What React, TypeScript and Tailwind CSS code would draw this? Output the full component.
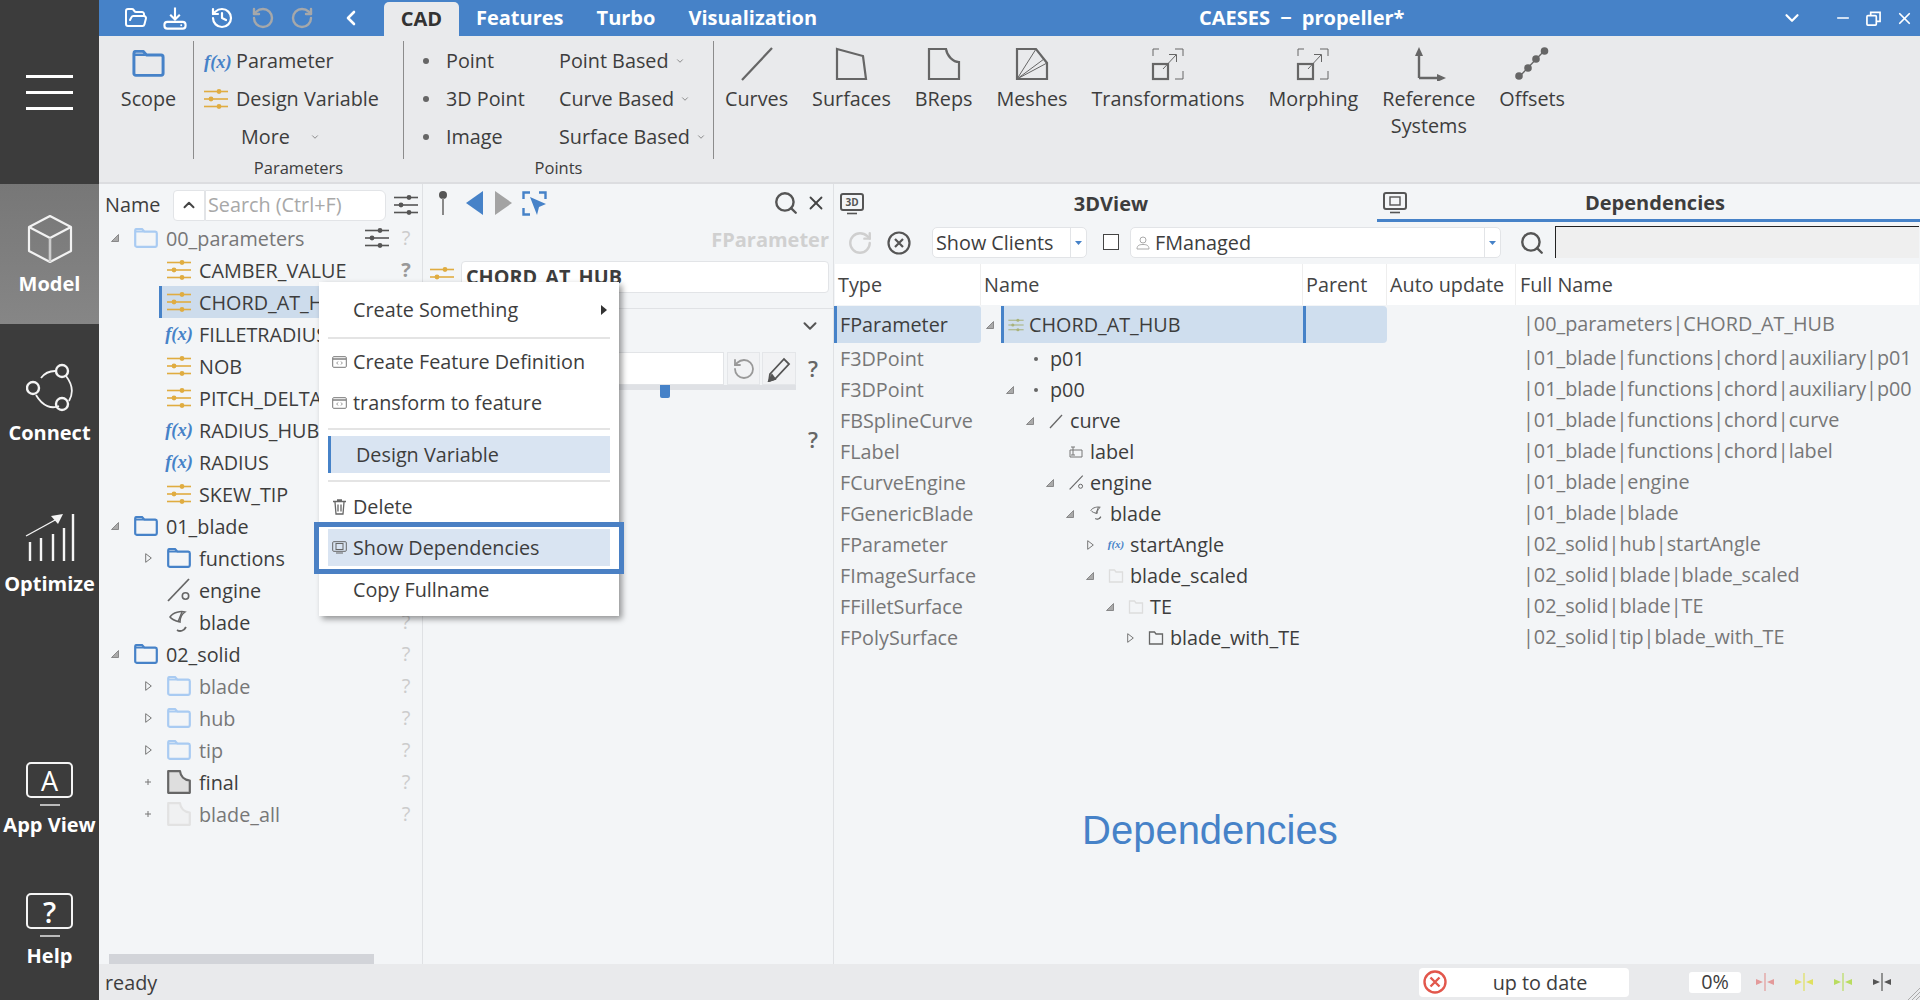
import React from 'react';
import { ChevronLeft, ChevronDown, ChevronUp, History, RotateCcw, RotateCw, Minus, X, Search, FolderOpen } from 'lucide-react';

const BLUE = '#4682c8';
const Sliders = ({ c = '#e0ac40', w = 24, h = 22 }: { c?: string; w?: number; h?: number }) => (
  <svg width={w} height={h} viewBox="0 0 24 22" className="shrink-0">
    <g stroke={c} strokeWidth="1.6" fill={c}>
      <line x1="0" y1="3.5" x2="24" y2="3.5" /><line x1="0" y1="11" x2="24" y2="11" /><line x1="0" y1="18.5" x2="24" y2="18.5" />
      <circle cx="15" cy="3.5" r="2.4" stroke="none" /><circle cx="7" cy="11" r="2.4" stroke="none" /><circle cx="15" cy="18.5" r="2.4" stroke="none" />
    </g>
  </svg>
);
const Folder = ({ c = BLUE, w = 24, h = 20 }: { c?: string; w?: number; h?: number }) => (
  <svg width={w} height={h} viewBox="0 0 24 20" className="shrink-0">
    <path d="M1.2 4.5V2.5A1.5 1.5 0 0 1 2.7 1H8L10.5 3.7H21.3A1.6 1.6 0 0 1 22.8 5.3V17.2A1.6 1.6 0 0 1 21.3 18.8H2.7A1.5 1.5 0 0 1 1.2 17.2Z" fill="none" stroke={c} strokeWidth="2.2" strokeLinejoin="round" />
    <path d="M1.5 2.5H8.5L10 4.5H1.5Z" fill={c} />
  </svg>
);
const Fx = ({ small }: { small?: boolean }) => (
  <span className={"font-['Liberation_Serif'] italic font-bold text-[#4682c8] leading-none shrink-0 " + (small ? 'text-[11px]' : 'text-[18.5px]')}>f(x)</span>
);
const Expanded = () => (
  <svg width="8" height="8" viewBox="0 0 8 8"><path d="M0.5 7.5L7.5 0.5V7.5Z" fill="#aaa" stroke="#777" strokeWidth="0.8" /></svg>
);
const Collapsed = () => (
  <svg width="7" height="10" viewBox="0 0 7 10"><path d="M0.7 0.7L6.3 5L0.7 9.3Z" fill="none" stroke="#777" strokeWidth="1" /></svg>
);
const Plus = () => (
  <svg width="8" height="8" viewBox="0 0 8 8"><path d="M4 1V7M1 4H7" stroke="#777" strokeWidth="1" /></svg>
);
const EngineIcon = ({ s = 24 }: { s?: number }) => (
  <svg width={s} height={s} viewBox="0 0 24 24" fill="none" stroke="#666" className="shrink-0"><path d="M1 23L22 1" strokeWidth="1.8" /><circle cx="18.5" cy="18" r="3.2" strokeWidth="1.6" /></svg>
);
const BladeIcon = ({ s = 24, c = '#666' }: { s?: number; c?: string }) => (
  <svg width={s} height={s} viewBox="0 0 24 24" fill="none" stroke={c} strokeWidth="1.5" className="shrink-0"><path d="M3 7C6 2 14 1 18 2C15 4 13 8 13 12C9 11 5 10 3 7Z" /><path d="M15 2L11 12" /><path d="M10 20C13 22 17 21 19 17" strokeWidth="1.8" /></svg>
);
const DocIcon = ({ fill, c, s = 24 }: { fill: string; c: string; s?: number }) => (
  <svg width={s} height={s} viewBox="0 0 24 24" className="shrink-0"><path d="M1.2 1.2H13C13.5 6 17 10 22.8 10.5V22.8H1.2Z" fill={fill} stroke={c} strokeWidth="2.2" strokeLinejoin="round" /></svg>
);
const Q = ({ v = 'light' }: { v?: string }) => (
  <span className={'w-4 text-center text-[20px] leading-none ' + (v === 'bold' ? 'font-bold text-[#999]' : 'text-[#ccc]')}>?</span>
);

type TR = { l: number; name: string; icon: string; arrow?: string; dim?: boolean; sel?: boolean; q?: string; gear?: boolean };
const tree: TR[] = [
  { l: 0, name: '00_parameters', icon: 'folderL', arrow: 'e', dim: true, q: 'light', gear: true },
  { l: 1, name: 'CAMBER_VALUE', icon: 's', q: 'bold' },
  { l: 1, name: 'CHORD_AT_HUB', icon: 's', sel: true },
  { l: 1, name: 'FILLETRADIUS', icon: 'f' },
  { l: 1, name: 'NOB', icon: 's' },
  { l: 1, name: 'PITCH_DELTA', icon: 's' },
  { l: 1, name: 'RADIUS_HUB', icon: 'f' },
  { l: 1, name: 'RADIUS', icon: 'f' },
  { l: 1, name: 'SKEW_TIP', icon: 's' },
  { l: 0, name: '01_blade', icon: 'folder', arrow: 'e' },
  { l: 1, name: 'functions', icon: 'folder', arrow: 'c' },
  { l: 1, name: 'engine', icon: 'engine' },
  { l: 1, name: 'blade', icon: 'blade', q: 'light' },
  { l: 0, name: '02_solid', icon: 'folder', arrow: 'e', q: 'light' },
  { l: 1, name: 'blade', icon: 'folderL', arrow: 'c', dim: true, q: 'light' },
  { l: 1, name: 'hub', icon: 'folderL', arrow: 'c', dim: true, q: 'light' },
  { l: 1, name: 'tip', icon: 'folderL', arrow: 'c', dim: true, q: 'light' },
  { l: 1, name: 'final', icon: 'doc', arrow: 'p', q: 'light' },
  { l: 1, name: 'blade_all', icon: 'docL', arrow: 'p', dim: true, q: 'light' },
];
const treeIcon = (k: string) => {
  if (k === 'folder') return <Folder />;
  if (k === 'folderL') return <Folder c="#a9cbf2" />;
  if (k === 's') return <Sliders />;
  if (k === 'f') return <div className="w-6 flex justify-center"><Fx /></div>;
  if (k === 'engine') return <EngineIcon />;
  if (k === 'blade') return <BladeIcon />;
  if (k === 'doc') return <DocIcon fill="#dedede" c="#666" />;
  return <DocIcon fill="#f0f1f2" c="#e2e2e2" />;
};
const Tree = () => (
  <div className="flex flex-col">
    {tree.map((r, i) => (
      <div key={i} className={'flex items-center h-8 ' + (r.l === 0 ? 'pl-[10px]' : 'pl-[43px]')}>
        <div className="w-3 flex justify-center items-center shrink-0">
          {r.arrow === 'e' && <Expanded />}
          {r.arrow === 'c' && <Collapsed />}
          {r.arrow === 'p' && <Plus />}
        </div>
        <div className={'ml-[5px] flex items-center h-8 border-l-[3px] pl-[5px] flex-1 min-w-0 ' + (r.sel ? 'border-[#4682c8] bg-[#cddcec]' : 'border-transparent')}>
          {treeIcon(r.icon)}
          <span className={'ml-2 pt-px whitespace-nowrap ' + (r.dim ? 'text-[#777]' : 'text-[#3d3d3d]')}>{r.name}</span>
        </div>
        {r.gear && <div className="mr-[9px]"><Sliders c="#555" /></div>}
        <div className="w-4 mr-2 flex justify-center">{r.q && <Q v={r.q} />}</div>
      </div>
    ))}
  </div>
);

const indents = ['pl-[0px]', 'pl-[20px]', 'pl-[40px]', 'pl-[60px]', 'pl-[80px]', 'pl-[100px]', 'pl-[120px]', 'pl-[140px]'];
const MiniDot = () => <div className="w-4 flex justify-center"><div className="w-[4px] h-[4px] rounded-full bg-[#666]" /></div>;
const MiniLine = () => <svg width="16" height="16" viewBox="0 0 16 16"><path d="M2 15L14 2" stroke="#666" strokeWidth="1.3" /></svg>;
const MiniLabel = () => <svg width="16" height="16" viewBox="0 0 16 16" fill="none" stroke="#777" strokeWidth="1"><path d="M2 6H14V13H2Z" /><path d="M3 3H7M5 3V11M3 11H7" /></svg>;
const MiniFace = ({ c }: { c: string }) => <svg width="16" height="16" viewBox="0 0 16 16"><path d="M1.5 2H6.5L8 4H14.5V14H1.5Z" fill="none" stroke={c} strokeWidth="1.3" /></svg>;
type DR = { t: string; l: number; n: string; a?: string; ic: React.ReactNode; full: string; sel?: boolean };
const deps: DR[] = [
  { t: 'FParameter', l: 0, n: 'CHORD_AT_HUB', a: 'e', ic: <Sliders c="#a9b27a" w={16} h={14} />, full: '|00_parameters|CHORD_AT_HUB', sel: true },
  { t: 'F3DPoint', l: 1, n: 'p01', ic: <MiniDot />, full: '|01_blade|functions|chord|auxiliary|p01' },
  { t: 'F3DPoint', l: 1, n: 'p00', a: 'e', ic: <MiniDot />, full: '|01_blade|functions|chord|auxiliary|p00' },
  { t: 'FBSplineCurve', l: 2, n: 'curve', a: 'e', ic: <MiniLine />, full: '|01_blade|functions|chord|curve' },
  { t: 'FLabel', l: 3, n: 'label', ic: <MiniLabel />, full: '|01_blade|functions|chord|label' },
  { t: 'FCurveEngine', l: 3, n: 'engine', a: 'e', ic: <EngineIcon s={15} />, full: '|01_blade|engine' },
  { t: 'FGenericBlade', l: 4, n: 'blade', a: 'e', ic: <BladeIcon s={15} />, full: '|01_blade|blade' },
  { t: 'FParameter', l: 5, n: 'startAngle', a: 'c', ic: <Fx small />, full: '|02_solid|hub|startAngle' },
  { t: 'FImageSurface', l: 5, n: 'blade_scaled', a: 'e', ic: <MiniFace c="#ddd" />, full: '|02_solid|blade|blade_scaled' },
  { t: 'FFilletSurface', l: 6, n: 'TE', a: 'e', ic: <MiniFace c="#ddd" />, full: '|02_solid|blade|TE' },
  { t: 'FPolySurface', l: 7, n: 'blade_with_TE', a: 'c', ic: <MiniFace c="#666" />, full: '|02_solid|tip|blade_with_TE' },
];

const Code = ({ c = '#777' }: { c?: string }) => (
  <svg width="15" height="12" viewBox="0 0 15 12" fill="none" stroke={c} className="shrink-0"><rect x="0.7" y="0.7" width="13.6" height="10.6" rx="1" /><path d="M1 3H14" strokeWidth="1.4" /><path d="M6 5.5L4.7 7L6 8.5M9 5.5L10.3 7L9 8.5" strokeWidth="0.8" /></svg>
);
const Screen = ({ s = 24, c = '#555', children }: { s?: number; c?: string; children?: React.ReactNode }) => (
  <svg width={s} height={(s * 22) / 24} viewBox="0 0 24 22" fill="none" stroke={c} className="shrink-0">
    <rect x="1" y="1" width="22" height="16" rx="2" strokeWidth="2" />
    <path d="M7 20.5H17" strokeWidth="1.6" />
    {children}
  </svg>
);

const RibbonLargeIcon = ({ k }: { k: string }) => {
  const c = '#666';
  const T = (
    <g fill="none" stroke={c}>
      <path d="M2 9V2H8M24 2H32V9M32 24V32H24" strokeWidth="1" />
      <rect x="2" y="17" width="15" height="15" strokeWidth="2.2" />
      <path d="M12 22L25 8M18 7.5H25.5V15" strokeWidth="1" />
    </g>
  );
  return (
    <svg width="34" height="34" viewBox="0 0 34 34">
      {k === 'curves' && <path d="M2 33L32 1" stroke={c} strokeWidth="2.2" />}
      {k === 'surfaces' && <path d="M3 2L29 9L32 32H3Z" fill="none" stroke={c} strokeWidth="2.2" />}
      {k === 'breps' && <path d="M2 2H19C20 9 26 15 32 15V32H2Z" fill="none" stroke={c} strokeWidth="2.2" />}
      {k === 'meshes' && <g fill="none" stroke={c}><path d="M2 2H21L32 16V32H2Z" strokeWidth="2.2" /><path d="M2 32L21 2M2 32L29 12M2 32L32 16" strokeWidth="1" /></g>}
      {(k === 'trans' || k === 'morph') && T}
      {k === 'ref' && <g fill={c} stroke={c}><path d="M7 31V6M7 31H30" fill="none" strokeWidth="2.4" /><path d="M3 9L7 0L11 9Z" stroke="none" /><path d="M25 27L34 31L25 35Z" stroke="none" /></g>}
      {k === 'offsets' && <g fill={c} stroke={c}><path d="M4 30L30 3" strokeWidth="1.3" /><circle cx="4" cy="29" r="3.8" stroke="none" /><circle cx="13" cy="21" r="3.8" stroke="none" /><circle cx="21" cy="12" r="3.8" stroke="none" /><circle cx="29.5" cy="4" r="3.8" stroke="none" /></g>}
    </svg>
  );
};
const large = [
  ['curves', 'Curves'], ['surfaces', 'Surfaces'], ['breps', 'BReps'], ['meshes', 'Meshes'], ['trans', 'Transformations'], ['morph', 'Morphing'], ['ref', 'Reference Systems'], ['offsets', 'Offsets'],
];
const SmallChevron = () => <ChevronDown size={10} strokeWidth={2} color="#777" className="ml-[6px]" />;
const Sep = () => <div className="w-px h-[118px] mt-[5px] bg-[#8c8c8c] shrink-0" />;
const RDot = () => <div className="w-[6px] h-[6px] rounded-full bg-[#666]" />;

const Marker = ({ c }: { c: string }) => (
  <svg width="18" height="18" viewBox="0 0 18 18"><path d="M0 6L7 9L0 12Z" fill={c} /><path d="M18 6L11 9L18 12Z" fill={c} /><path d="M9 0V18" stroke={c} strokeWidth="1.2" /></svg>
);

const MenuSep = ({ cls }: { cls: string }) => <div className={'mx-[9px] h-[2px] bg-[#e4e4e4] ' + cls} />;

export default function App() {
  return (
    <div className="relative flex w-[1920px] h-[1000px] overflow-hidden font-['Open_Sans',sans-serif] text-[19.8px] text-[#3d3d3d] bg-[#f3f5f7]">
      {/* Sidebar */}
      <aside className="w-[99px] shrink-0 bg-[#3c3c3c] flex flex-col text-white font-bold text-[20px] items-stretch">
        <div className="h-[184px] pt-[75px] flex flex-col items-center gap-[13px]">
          <div className="w-[47px] h-[3px] bg-white" />
          <div className="w-[47px] h-[3px] bg-white" />
          <div className="w-[47px] h-[3px] bg-white" />
        </div>
        <div className="h-[140px] bg-gradient-to-b from-[#777] to-[#868686] flex flex-col items-center pt-[30px]">
          <svg width="46" height="50" viewBox="0 0 46 50" fill="none" stroke="#f2f2f2" strokeWidth="2.2" strokeLinejoin="round">
            <path d="M23 2L44 13V37L23 48L2 37V13Z" /><path d="M2 13L23 24L44 13" /><path d="M23 24V48" strokeWidth="2.6" stroke="#ccc" />
          </svg>
          <span className="mt-[7px] leading-[26px]">Model</span>
        </div>
        <div className="h-[150px] flex flex-col items-center pt-[39px]">
          <svg width="48" height="50" viewBox="0 0 48 50" fill="none" stroke="#f4f4f4" strokeWidth="2.4">
            <path d="M15 15C18 11 23 8 29 8M40 13C47 22 47 31 43 38M33 43C26 46 17 44 10 32" strokeWidth="1.8" />
            <circle cx="36" cy="8" r="6" /><circle cx="7" cy="25" r="6" /><circle cx="36" cy="41" r="6" />
          </svg>
          <span className="mt-[7px] leading-[26px]">Connect</span>
        </div>
        <div className="h-[150px] flex flex-col items-center pt-[39px]">
          <svg width="50" height="50" viewBox="0 0 50 50" fill="none" stroke="#f4f4f4" strokeWidth="2.4">
            <path d="M6 29V48M17 25V48M29 21V48M40 15V48M49 1V48" transform="translate(-1 0)" />
            <path d="M1 23L32 6" strokeWidth="1.4" />
            <path d="M26 3L38 1L33 11Z" fill="#f4f4f4" stroke="none" />
          </svg>
          <span className="mt-[8px] leading-[26px]">Optimize</span>
        </div>
        <div className="mt-[138px] flex flex-col items-center">
          <div className="flex flex-col items-center">
            <div className="w-[47px] h-[36px] border-[2.5px] border-[#f4f4f4] rounded-[5px] flex items-center justify-center font-normal text-[27px] leading-none">A</div>
            <div className="w-[20px] h-[2px] bg-[#bbb] mt-[6px]" />
          </div>
          <span className="mt-[6px] leading-[26px] whitespace-nowrap">App View</span>
          <div className="flex flex-col items-center mt-[55px]">
            <div className="w-[47px] h-[36px] border-[2.5px] border-[#f4f4f4] rounded-[5px] flex items-center justify-center font-semibold text-[29px] leading-none">?</div>
            <div className="w-[20px] h-[2px] bg-[#bbb] mt-[6px]" />
          </div>
          <span className="mt-[6px] leading-[26px]">Help</span>
        </div>
      </aside>

      <div className="flex-1 flex flex-col min-w-0">
        {/* Title bar */}
        <header className="h-9 bg-[#4682c8] flex items-end text-white shrink-0 font-bold text-[20px] relative">
          <div className="flex items-center h-9">
            <div className="ml-[25px]"><FolderOpen size={24} strokeWidth={2} /></div>
            <svg width="24" height="25" viewBox="0 0 25 25" fill="none" stroke="white" strokeWidth="2.2" className="ml-[15px]"><path d="M12.5 1V13M7.5 8.5L12.5 13.5L17.5 8.5" /><rect x="1.5" y="16" width="22" height="7" rx="3" /><circle cx="19" cy="19.5" r="1" fill="white" stroke="none" /></svg>
            <div className="ml-[23px]"><History size={24} strokeWidth={2.2} /></div>
            <div className="ml-[17px]"><RotateCcw size={24} strokeWidth={2.4} color="#a6a8aa" /></div>
            <div className="ml-[15px]"><RotateCw size={24} strokeWidth={2.4} color="#a6a8aa" /></div>
            <div className="ml-[25px]"><ChevronLeft size={24} strokeWidth={2.6} /></div>
          </div>
          <div className="ml-[21px] w-[75px] h-[34px] bg-[#e9eaec] rounded-t-[5px] text-[#333] flex items-center justify-center">CAD</div>
          <div className="ml-[17px] h-9 flex items-center">Features</div>
          <div className="ml-[33px] h-9 flex items-center">Turbo</div>
          <div className="ml-[33px] h-9 flex items-center">Visualization</div>
          <div className="ml-[382px] h-9 flex items-center whitespace-pre [word-spacing:5px]">CAESES − propeller*</div>
          <div className="ml-auto h-9 flex items-center pr-[6px] font-normal">
            <ChevronDown size={22} strokeWidth={2.4} />
            <div className="ml-[31px]"><Minus size={18} strokeWidth={2.2} /></div>
            <svg width="15" height="15" viewBox="0 0 16 16" fill="none" stroke="white" strokeWidth="1.8" className="ml-[14px]"><rect x="1" y="5" width="10" height="10" rx="1" /><path d="M5 5V1.5H15V11H11" /></svg>
            <div className="ml-[14px]"><X size={19} strokeWidth={2.2} /></div>
          </div>
        </header>

        {/* Ribbon */}
        <section className="h-[148px] bg-[#e9eaec] border-b-2 border-[#dcdde0] flex shrink-0">
          <div className="w-[94px] flex flex-col items-center pt-[14px] pl-[5px] shrink-0">
            <div className="h-[27px] flex items-center"><Folder w={33} h={27} /></div>
            <span className="mt-[8px] leading-[28px]">Scope</span>
          </div>
          <Sep />
          <div className="w-[209px] flex flex-col shrink-0">
            <div className="pt-[6px] pl-[10px]">
              <div className="h-[38px] flex items-center"><div className="w-[27px]"><Fx /></div><span className="ml-[5px]">Parameter</span></div>
              <div className="h-[38px] flex items-center"><Sliders /><span className="ml-2">Design Variable</span></div>
              <div className="h-[38px] flex items-center pl-[37px]"><span>More</span><div className="ml-[14px]"><SmallChevron /></div></div>
            </div>
            <div className="text-[16.5px] leading-[20px] text-center mt-[2px]">Parameters</div>
          </div>
          <Sep />
          <div className="w-[309px] flex flex-col shrink-0">
            <div className="pt-[6px] flex">
              <div className="w-[155px]">
                {['Point', '3D Point', 'Image'].map((t) => (
                  <div key={t} className="h-[38px] flex items-center pl-[19px]"><RDot /><span className="ml-[17px]">{t}</span></div>
                ))}
              </div>
              <div>
                {['Point Based', 'Curve Based', 'Surface Based'].map((t) => (
                  <div key={t} className="h-[38px] flex items-center whitespace-nowrap"><span>{t}</span><SmallChevron /></div>
                ))}
              </div>
            </div>
            <div className="text-[16.5px] leading-[20px] text-center mt-[2px]">Points</div>
          </div>
          <Sep />
          <div className="flex gap-[24px] pl-[11px] items-start">
            {large.map(([k, t]) => (
              <div key={k} className={'flex flex-col items-center text-center ' + (k === 'ref' ? 'w-[93px]' : '')}>
                <div className="h-[34px] mt-[11px]"><RibbonLargeIcon k={k} /></div>
                <span className="mt-[4px] leading-[27px]">{t}</span>
              </div>
            ))}
          </div>
        </section>

        {/* Panels */}
        <main className="flex-1 flex min-h-0">
          {/* Tree */}
          <div className="w-[324px] shrink-0 border-r border-[#dfe1e4] flex flex-col">
            <div className="h-[38px] flex items-center pt-[4px] pl-[6px]">
              <span className="w-[68px]">Name</span>
              <div className="w-[32px] h-[31px] bg-white border border-[#e2e4e7] rounded-l-[4px] flex items-center justify-center"><ChevronUp size={18} strokeWidth={2.6} color="#444" /></div>
              <div className="w-[181px] h-[31px] bg-white border border-[#e2e4e7] rounded-r-[6px] flex items-center pl-[2px] text-[#a8a8a8] whitespace-nowrap overflow-hidden">Search (Ctrl+F)</div>
              <div className="ml-[8px]"><Sliders c="#555" /></div>
            </div>
            <Tree />
            <div className="mt-auto ml-[10px] w-[265px] h-[10px] bg-[#d2d4d9]" />
          </div>

          {/* Middle */}
          <div className="w-[411px] shrink-0 border-r border-[#dfe1e4] flex flex-col">
            <div className="h-[38px] flex items-center pl-[14px] pr-[6px]">
              <svg width="12" height="26" viewBox="0 0 12 26"><circle cx="6" cy="5" r="4" fill="#555" /><path d="M6 8V25" stroke="#888" strokeWidth="2" /></svg>
              <svg width="18" height="24" viewBox="0 0 18 24" className="ml-[17px]"><path d="M17 0V24L0 12Z" fill="#4682c8" /></svg>
              <svg width="17" height="24" viewBox="0 0 17 24" className="ml-[11px]"><path d="M0 0V24L17 12Z" fill="#a3a3a3" /></svg>
              <svg width="25" height="25" viewBox="0 0 25 25" fill="none" stroke="#4682c8" strokeWidth="2.4" className="ml-[10px]"><path d="M1.5 8V1.5H8M17 1.5H23.5V8M1.5 17V23.5H8" /><path d="M8 6L24 13L17 16L15 24Z" fill="#4682c8" stroke="none" /></svg>
              <div className="ml-auto flex items-center">
                <Search size={26} strokeWidth={2.2} color="#555" />
                <div className="ml-[6px]"><X size={22} strokeWidth={2} color="#444" /></div>
              </div>
            </div>
            <div className="h-[36px] flex items-center justify-end pr-[4px] text-[#d0d0d0] font-bold text-[20px]">FParameter</div>
            <div className="mt-[3px] h-[32px] flex items-center">
              <div className="ml-[7px]"><Sliders /></div>
              <div className="ml-[7px] w-[368px] h-[32px] bg-white border border-[#e2e4e7] rounded-[4px] flex items-center pl-[4px] font-bold whitespace-nowrap">CHORD_AT_HUB</div>
            </div>
            <div className="mt-[15px] h-px bg-[#e0e2e5]" />
            <div className="h-[34px] flex items-center justify-end pr-[12px]"><ChevronDown size={22} strokeWidth={2.2} color="#555" /></div>
            <div className="mt-[9px] h-[33px] flex items-center">
              <div className="ml-[17px] w-[284px] h-[33px] bg-white border border-[#e2e4e7]" />
              <div className="ml-[3px] w-[33px] h-[33px] border border-[#e4e6e9] bg-[#f1f2f4] flex items-center justify-center"><RotateCcw size={24} strokeWidth={1.8} color="#999" /></div>
              <div className="ml-[2px] w-[34px] h-[33px] border border-[#e4e6e9] bg-[#f1f2f4] flex items-center justify-center">
                <svg width="24" height="26" viewBox="0 0 24 26" fill="none" stroke="#555" strokeWidth="1.8"><path d="M3 18L17 3L22 8L8 23L2 25Z" /><path d="M2 25L5 19L8 23Z" fill="#555" /></svg>
              </div>
              <span className="ml-[9px] w-4 text-center font-semibold text-[22px] text-[#666]">?</span>
            </div>
            <div className="relative ml-[17px] w-[356px] h-[5px] bg-[#dfe1e5]">
              <div className="absolute left-[220px] top-0 w-[10px] h-[13px] bg-[#4682c8] rounded-b-[2px]" />
            </div>
            <div className="mt-[36px] h-[26px] flex items-center justify-end pr-[12px]"><span className="w-4 text-center font-semibold text-[22px] text-[#666]">?</span></div>
          </div>

          {/* Right */}
          <div className="flex-1 flex flex-col min-w-0">
            <div className="h-[38px] flex shrink-0 font-bold text-[20px]">
              <div className="w-[543px] flex items-center pl-[6px] pt-[1px]">
                <Screen><text x="12" y="13" textAnchor="middle" fontSize="10" fontWeight="700" fill="#555" stroke="none" fontFamily="Open Sans">3D</text></Screen>
                <div className="flex-1 text-center pr-[19px]">3DView</div>
              </div>
              <div className="flex-1 flex items-center pl-[6px] pt-[3px] border-b-[3px] border-[#4682c8]">
                <Screen><rect x="7" y="5" width="10" height="8" strokeWidth="1.4" /></Screen>
                <div className="flex-1 text-center pr-[17px]">Dependencies</div>
              </div>
            </div>
            <div className="h-[42px] pt-[5px] flex items-start shrink-0">
              <div className="ml-[13px] h-[31px] flex items-center"><RotateCw size={26} strokeWidth={2.2} color="#cfcfcf" /></div>
              <div className="ml-[14px] h-[31px] flex items-center">
                <svg width="24" height="24" viewBox="0 0 24 24" fill="none" stroke="#555" strokeWidth="2.2"><circle cx="12" cy="12" r="10.5" /><path d="M8 8L16 16M16 8L8 16" /></svg>
              </div>
              <div className="ml-[21px] w-[155px] h-[31px] bg-white border border-[#e2e4e7] rounded-[5px] flex items-center pl-[3px]">
                <span className="flex-1 whitespace-nowrap">Show Clients</span>
                <div className="w-[16px] h-full border-l border-[#e2e4e7] flex items-center justify-center"><svg width="7" height="4"><path d="M0 0H7L3.5 4Z" fill="#4682c8" /></svg></div>
              </div>
              <div className="ml-[16px] mt-[7px] w-[16px] h-[16px] border-[1.5px] border-[#444] bg-white shrink-0" />
              <div className="ml-[11px] w-[371px] h-[31px] bg-white border border-[#e2e4e7] rounded-[5px] flex items-center pl-[5px]">
                <svg width="14" height="14" viewBox="0 0 14 14" fill="none" stroke="#aaa"><circle cx="7" cy="4" r="3" /><path d="M1 13C1 9 4 8.5 7 8.5S13 9 13 13Z" /></svg>
                <span className="flex-1 ml-[5px]">FManaged</span>
                <div className="w-[16px] h-full border-l border-[#e2e4e7] flex items-center justify-center"><svg width="7" height="4"><path d="M0 0H7L3.5 4Z" fill="#4682c8" /></svg></div>
              </div>
              <div className="ml-[18px] h-[31px] flex items-center"><Search size={26} strokeWidth={2.2} color="#555" /></div>
              <div className="ml-[10px] w-[364px] h-[32px] mt-[-1px] bg-[#efefef] border-t-[1.5px] border-l-[1.5px] border-[#222]" />
            </div>
            {/* Table header */}
            <div className="h-[41px] bg-white flex items-center ml-px mr-px shrink-0 text-[#444]">
              <div className="w-[146px] pl-[3px] h-full flex items-center border-r border-[#eeeeee]">Type</div>
              <div className="w-[322px] pl-[3px] h-full flex items-center border-r border-[#eeeeee]">Name</div>
              <div className="w-[84px] pl-[3px] h-full flex items-center border-r border-[#eeeeee]">Parent</div>
              <div className="w-[129px] pl-[3px] h-full flex items-center border-r border-[#eeeeee] whitespace-nowrap">Auto update</div>
              <div className="flex-1 pl-[4px] h-full flex items-center">Full Name</div>
            </div>
            <div className="h-px" />
            {deps.map((d, i) => (
              <div key={i} className={'flex items-center shrink-0 ' + (d.sel ? 'h-[37px]' : 'h-[31px]')}>
                <div className={'w-[147px] h-full flex items-center border-l-[3px] pl-[3px] rounded-r-[3px] ' + (d.sel ? 'border-[#4682c8] bg-[#cfdeee] text-[#3d3d3d]' : 'border-transparent text-[#777]')}>{d.t}</div>
                <div className={'w-[322px] h-full flex items-center text-[#3d3d3d] ' + indents[d.l]}>
                  <div className="h-full w-[4px] shrink-0" />
                  <div className="w-[10px] flex justify-center items-center shrink-0">
                    {d.a === 'e' && <Expanded />}
                    {d.a === 'c' && <Collapsed />}
                  </div>
                  <div className={'ml-[6px] h-full flex items-center border-l-[3px] pl-[4px] flex-1 ' + (d.sel ? 'border-[#4682c8] bg-[#cfdeee]' : 'border-transparent')}>
                    <div className="w-4 flex justify-center items-center shrink-0">{d.ic}</div>
                    <span className={'whitespace-nowrap ' + (d.sel ? 'ml-[5px]' : 'ml-[6px]')}>{d.n}</span>
                  </div>
                </div>
                <div className={'w-[84px] h-full border-l-[3px] rounded-r-[4px] ' + (d.sel ? 'border-[#4682c8] bg-[#cfdeee]' : 'border-transparent')} />
                <div className="w-[129px]" />
                <div className="pl-[7px] pb-[2px] text-[#777] whitespace-nowrap">{d.full}</div>
              </div>
            ))}
            <div className="mt-[154px] ml-[248px] font-['Liberation_Sans',sans-serif] text-[40px] leading-[46px] text-[#4682c8]">Dependencies</div>
          </div>
        </main>

        {/* Status */}
        <footer className="relative h-9 bg-[#e9eaec] flex items-center shrink-0 pl-[6px]">
          <span className="pt-[2px] w-[46px]">ready</span>
          <div className="ml-[1268px] w-[210px] h-[29px] bg-white rounded-[4px] flex items-center pl-[4px] shrink-0">
            <svg width="24" height="24" viewBox="0 0 24 24" fill="none" stroke="#e2574c" strokeWidth="2.4"><circle cx="12" cy="12" r="10.5" /><path d="M7.5 7.5L16.5 16.5M16.5 7.5L7.5 16.5" /></svg>
            <span className="flex-1 text-center pl-[4px] pt-[2px]">up to date</span>
          </div>
          <div className="ml-[60px] w-[52px] h-[21px] bg-white rounded-[3px] flex items-center justify-center shrink-0">0%</div>
          <div className="ml-[15px] flex gap-[21px] shrink-0">
            <Marker c="#e39a9a" /><Marker c="#e0e060" /><Marker c="#b9dc60" /><Marker c="#555" />
          </div>
          <svg width="12" height="12" viewBox="0 0 12 12" className="absolute right-0 bottom-0" stroke="#aaa" strokeWidth="1"><path d="M0 12L12 0M4 12L12 4M8 12L12 8" /></svg>
        </footer>
      </div>

      {/* Context menu */}
      <div className="absolute left-[319px] top-[282px] w-[300px] h-[334px] bg-white shadow-[3px_3px_6px_rgba(0,0,0,0.4)] flex flex-col">
        <div className="h-[55px] flex items-center pl-[34px] pr-[12px]"><span className="flex-1">Create Something</span><svg width="6" height="10"><path d="M0 0L6 5L0 10Z" fill="#333" /></svg></div>
        <MenuSep cls="" />
        <div className="h-[41px] mt-[2px] flex items-center pl-[13px]"><Code /><span className="ml-[6px]">Create Feature Definition</span></div>
        <div className="h-[41px] flex items-center pl-[13px]"><Code /><span className="ml-[6px]">transform to feature</span></div>
        <MenuSep cls="mt-[5px]" />
        <div className="mx-[9px] mt-[6px] h-[37px] bg-[#d9e4f2] border-l-[3px] border-[#4682c8] flex items-center pl-[25px]">Design Variable</div>
        <MenuSep cls="mt-[7px]" />
        <div className="h-[41px] mt-[4px] flex items-center pl-[13px]">
          <svg width="15" height="16" viewBox="0 0 15 16" fill="none" stroke="#666" strokeWidth="1.3" className="shrink-0"><path d="M1 2.5H14M3 3L4 15H11L12 3M5 1H10M6 5.5V12.5M9 5.5V12.5" /></svg>
          <span className="ml-[6px]">Delete</span>
        </div>
        <div className="mx-[9px] h-[37px] mt-[2px] bg-[#d9e4f2] flex items-center pl-[4px]">
          <svg width="15" height="13" viewBox="0 0 15 13" fill="none" stroke="#666" className="shrink-0"><rect x="0.7" y="0.7" width="13.6" height="9.6" rx="1" /><rect x="4" y="2.5" width="7" height="6" /><path d="M4 12H11" /></svg>
          <span className="ml-[6px]">Show Dependencies</span>
        </div>
        <div className="h-[41px] mt-[3px] flex items-center pl-[34px]">Copy Fullname</div>
      </div>
      <div className="absolute left-[314px] top-[522px] w-[310px] h-[52px] border-[5px] border-[#4a80c4] pointer-events-none" />
    </div>
  );
}
